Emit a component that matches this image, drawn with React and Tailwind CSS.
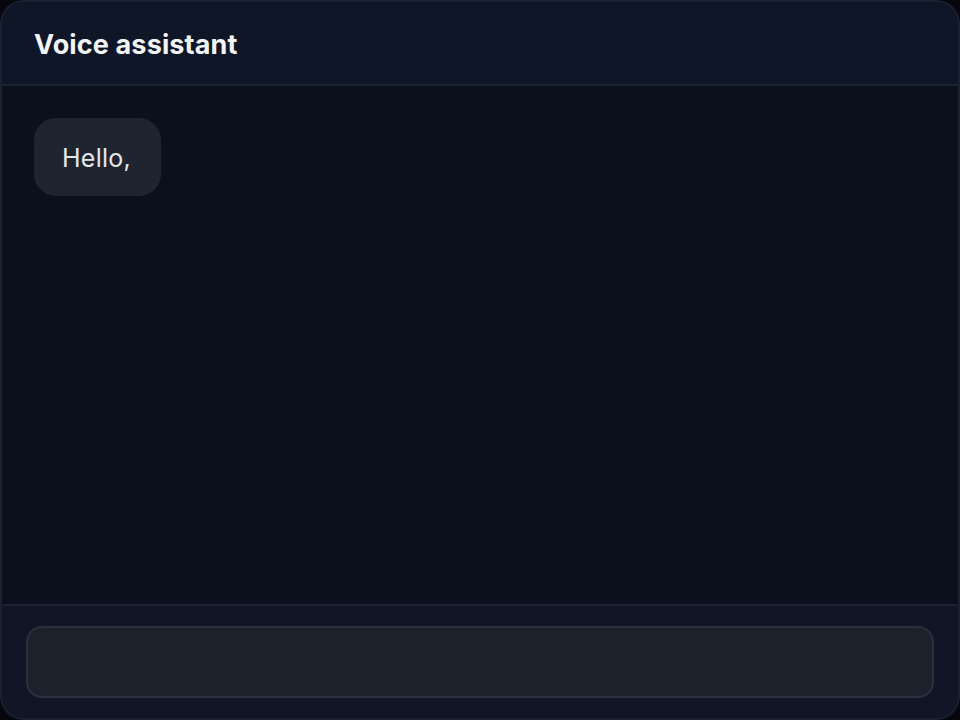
import React from "react";

// Voice assistant panel
export default function App() {
  return (
    <div
      className="w-[960px] h-[720px] bg-[#05070d]"
      style={{ fontFamily: "Inter, 'Noto Sans', sans-serif" }}
    >
      <div className="flex h-full flex-col overflow-hidden rounded-[24px] border-2 border-[#1a2130] bg-[#0b111c]">
        <header className="flex h-[84px] shrink-0 items-center border-b-2 border-[#1a2231] bg-[#0f1628] px-8 pt-1">
          <h1 className="text-[27px] font-bold tracking-[0.005em] text-[#f3f4f6]">Voice assistant</h1>
        </header>

        <main className="flex-1 px-8 py-8">
          <div className="inline-flex h-[78px] items-center rounded-[22px] bg-[#1e2430] pl-7 pr-[30px] pt-[3px] text-[25px] tracking-[0.01em] text-[#e5e7eb]">
            Hello,
          </div>
        </main>

        <footer className="h-[114px] shrink-0 border-t-2 border-[#1a2231] bg-[#101626] px-6 pt-5">
          <div className="h-[72px] rounded-[16px] border-2 border-[#2a303c] bg-[#1c212c]" />
        </footer>
      </div>
    </div>
  );
}
